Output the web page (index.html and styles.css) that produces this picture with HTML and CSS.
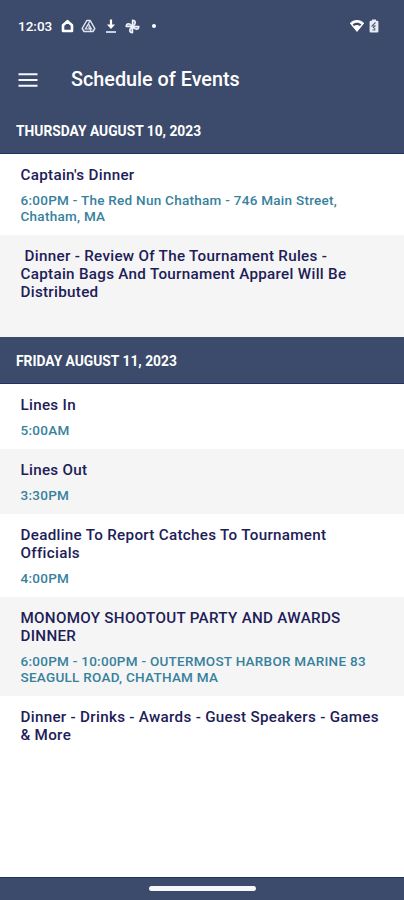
FILE: index.html
```html
<!DOCTYPE html>
<html lang="en">
<head>
    <meta charset="UTF-8">
    <meta name="viewport" content="width=device-width, initial-scale=1.0">
    <title>Schedule of Events</title>
    <link rel="stylesheet" href="styles.css">
</head>
<body>
    <header>
        <div class="status-bar">
            <span class="clock">12:03</span>
            <svg class="icon home" width="13" height="14" viewBox="0 0 13 14">
                <path d="M2 12V6.2L6.5 2.2L11 6.2V12Z" fill="none" stroke="#fff" stroke-width="2.6" stroke-linejoin="round"/>
            </svg>
            <svg class="icon drive" width="15" height="14" viewBox="0 0 15 14">
                <path d="M5.8 1.5H9.2L13.8 9.5L12 12.5H3L1.2 9.5Z" fill="none" stroke="#dfe4ee" stroke-width="1.5" stroke-linejoin="round"/>
                <path d="M7.5 5L4.5 10H10.5ZM9 2L4 10.5M7.5 7.5L10 12" fill="none" stroke="#dfe4ee" stroke-width="1.2"/>
            </svg>
            <svg class="icon download" width="12" height="15" viewBox="0 0 12 15">
                <path d="M6 0.5V8" stroke="#fff" stroke-width="2.2"/>
                <path d="M2 5.4H10L6 10Z" fill="#fff"/>
                <path d="M1 13H11" stroke="#c8cfdd" stroke-width="2"/>
            </svg>
            <svg class="icon fan" width="15" height="15" viewBox="0 0 15 15">
                <g fill="#8e99b3" stroke="#eef1f7" stroke-width="1.5" stroke-linejoin="round">
                    <path d="M7.5 7.5V1.2C11 1.2 11.4 5 7.5 7.5Z"/>
                    <path d="M7.5 7.5H13.8C13.8 11 10 11.4 7.5 7.5Z"/>
                    <path d="M7.5 7.5V13.8C4 13.8 3.6 10 7.5 7.5Z"/>
                    <path d="M7.5 7.5H1.2C1.2 4 5 3.6 7.5 7.5Z"/>
                </g>
            </svg>
            <span class="dot"></span>
            <svg class="icon wifi" width="16" height="14" viewBox="0 0 16 14">
                <path d="M1.3 4.2C5 0.6 11 0.6 14.7 4.2L8 12.4Z" fill="#fff" stroke="#fff" stroke-linejoin="round"/>
                <path d="M3.6 5.3C6 3.2 10 3.2 12.4 5.3L11 7C9 5.6 7 5.6 5 7Z" fill="#3c4a6b"/>
            </svg>
            <svg class="icon battery" width="10" height="14" viewBox="0 0 10 14">
                <path d="M3 0.5H7V1.8H8.2Q9.4 1.8 9.4 3V12.3Q9.4 13.5 8.2 13.5H1.8Q0.6 13.5 0.6 12.3V3Q0.6 1.8 1.8 1.8H3Z" fill="#e8ebf2"/>
                <path d="M6.5 3.5L3 7H6L4 9M3.4 11H5.8V9" fill="none" stroke="#59657f" stroke-width="1.1"/>
            </svg>
        </div>
        <div class="app-bar">
            <svg class="menu" width="20" height="14" viewBox="0 0 20 14">
                <path d="M0.5 1.2H19.5M0.5 7H19.5M0.5 12.8H19.5" stroke="#f5f7fb" stroke-width="1.9"/>
            </svg>
            <h1>Schedule of Events</h1>
        </div>
    </header>

    <main>
        <h2 class="first">THURSDAY AUGUST 10, 2023</h2>
        <div class="event">
            <h3>Captain's Dinner</h3>
            <p>6:00PM - The Red Nun Chatham - 746 Main Street,<br>Chatham, MA</p>
        </div>
        <div class="event gray notes">
            <h3>&nbsp;Dinner - Review Of The Tournament Rules -<br>Captain Bags And Tournament Apparel Will Be<br>Distributed</h3>
        </div>

        <h2>FRIDAY AUGUST 11, 2023</h2>
        <div class="event">
            <h3>Lines In</h3>
            <p>5:00AM</p>
        </div>
        <div class="event gray">
            <h3>Lines Out</h3>
            <p>3:30PM</p>
        </div>
        <div class="event">
            <h3>Deadline To Report Catches To Tournament<br>Officials</h3>
            <p>4:00PM</p>
        </div>
        <div class="event gray">
            <h3>MONOMOY SHOOTOUT PARTY AND AWARDS<br>DINNER</h3>
            <p>6:00PM - 10:00PM - OUTERMOST HARBOR MARINE 83<br>SEAGULL ROAD, CHATHAM MA</p>
        </div>
        <div class="event">
            <h3>Dinner - Drinks - Awards - Guest Speakers - Games<br>&amp; More</h3>
        </div>
    </main>

    <footer>
        <div class="handle"></div>
    </footer>
</body>
</html>
```
FILE: styles.css
```css
* {
    box-sizing: border-box;
}
body {
    font-family: Roboto, sans-serif;
    background-color: #fff;
    margin: 0;
    height: 900px;
    display: flex;
    flex-direction: column;
    overflow: hidden;
}
h1, h2, h3, p {
    margin: 0;
    white-space: nowrap;
}
header {
    background-color: #3c4a6b;
    color: #fff;
    height: 110px;
}
.status-bar {
    display: flex;
    align-items: center;
    height: 52px;
    padding: 0 25px 0 18px;
}
.clock {
    font-size: 13.5px;
    font-weight: 500;
    width: 34px;
    margin-right: 9px;
}
.home {
    margin-right: 7px;
}
.drive {
    margin-right: 9px;
}
.download {
    margin-right: 8px;
}
.dot {
    width: 4px;
    height: 4px;
    margin-left: 12px;
    border-radius: 50%;
    background-color: #fff;
}
.wifi {
    margin-left: auto;
    margin-right: 4px;
}
.app-bar {
    display: flex;
    align-items: center;
    height: 55px;
    padding-left: 18px;
}
.menu {
    margin-right: 33px;
}
h1 {
    font-size: 19.8px;
    font-weight: 500;
}
h2 {
    height: 47px;
    padding-left: 16px;
    background-color: #3c4a6b;
    border-bottom: 1px solid #1f3463;
    color: #fff;
    font-size: 13.8px;
    font-weight: 700;
    line-height: 48px;
}
h2.first {
    height: 44px;
    line-height: 42px;
}
.event {
    padding: 12px 20.5px 11px;
}
.gray {
    background-color: #f5f5f5;
}
.notes {
    height: 102px;
}
h3 {
    color: #1d2057;
    font-size: 15.2px;
    font-weight: 500;
    letter-spacing: 0.3px;
    line-height: 18.3px;
}
p {
    margin-top: 7.6px;
    color: #37819c;
    font-size: 13.5px;
    font-weight: 500;
    letter-spacing: 0.27px;
    line-height: 16px;
}
footer {
    height: 23px;
    margin-top: auto;
    padding-top: 8px;
    background-color: #3c4a6b;
    border-top: 1px solid #1f3463;
}
.handle {
    width: 107px;
    height: 5px;
    margin: 0 auto;
    border-radius: 3px;
    background-color: #f5f7fa;
}
```
